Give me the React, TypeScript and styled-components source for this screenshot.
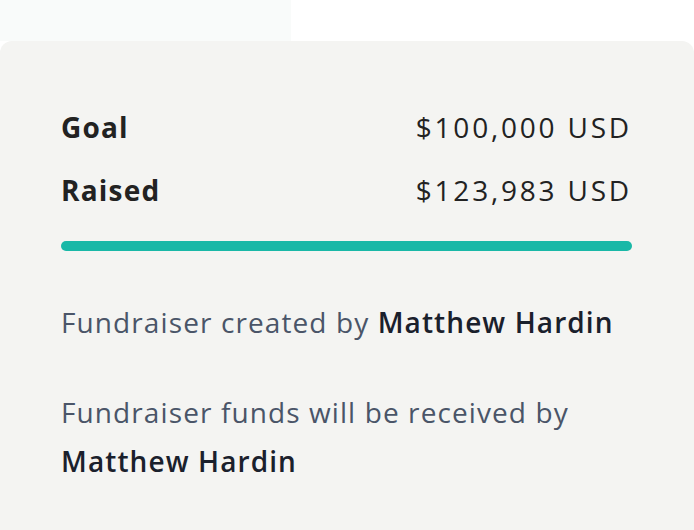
import React from 'react';
import styled, { createGlobalStyle } from 'styled-components';

const GlobalStyle = createGlobalStyle`
  body {
    margin: 0;
    background: #fff;
    font-family: "Open Sans", "Noto Sans", sans-serif;
  }
`;

const StyledPage = styled.div`
  width: 694px;
  height: 530px;
  overflow: hidden;
`;

const StyledTab = styled.div`
  width: 291px;
  height: 41px;
  background: #f9fbfa;
`;

const StyledCard = styled.div`
  display: flex;
  flex-direction: column;
  background: #f4f4f2;
  border-radius: 12px 12px 0 0;
  padding: 66px 62px 40px 61px;
  height: 100%;
`;

const StyledStats = styled.div`
  display: flex;
  flex-direction: column;
  gap: 23px;
`;

const StyledRow = styled.div`
  display: flex;
  justify-content: space-between;
  align-items: center;
  height: 40px;
  font-size: 28px;
  color: #222;
`;

const StyledLabel = styled.span`
  font-weight: 700;
  letter-spacing: 1.2px;
`;

const StyledValue = styled.span`
  font-weight: 400;
  letter-spacing: 2.8px;
`;

const StyledBar = styled.div`
  height: 10px;
  border-radius: 5px;
  background: #19b8a7;
  margin-top: 31px;
`;

const StyledNote = styled.p<{ gap: number }>`
  margin: ${props => props.gap}px 0 0;
  font-size: 28px;
  line-height: 49px;
  letter-spacing: 1.1px;
  color: #4a5568;
`;

const StyledName = styled.strong`
  font-weight: 600;
  color: #1a202c;
`;

const App: React.FC = () => {
  return (
    <StyledPage>
      <GlobalStyle />
      <StyledTab />
      <StyledCard>
        <StyledStats>
          <StyledRow>
            <StyledLabel>Goal</StyledLabel>
            <StyledValue>$100,000 USD</StyledValue>
          </StyledRow>
          <StyledRow>
            <StyledLabel>Raised</StyledLabel>
            <StyledValue>$123,983 USD</StyledValue>
          </StyledRow>
        </StyledStats>
        <StyledBar />
        <StyledNote gap={47}>
          Fundraiser created by <StyledName>Matthew Hardin</StyledName>
        </StyledNote>
        <StyledNote gap={41}>
          Fundraiser funds will be received by
          <br />
          <StyledName>Matthew Hardin</StyledName>
        </StyledNote>
      </StyledCard>
    </StyledPage>
  );
};

export default App;
